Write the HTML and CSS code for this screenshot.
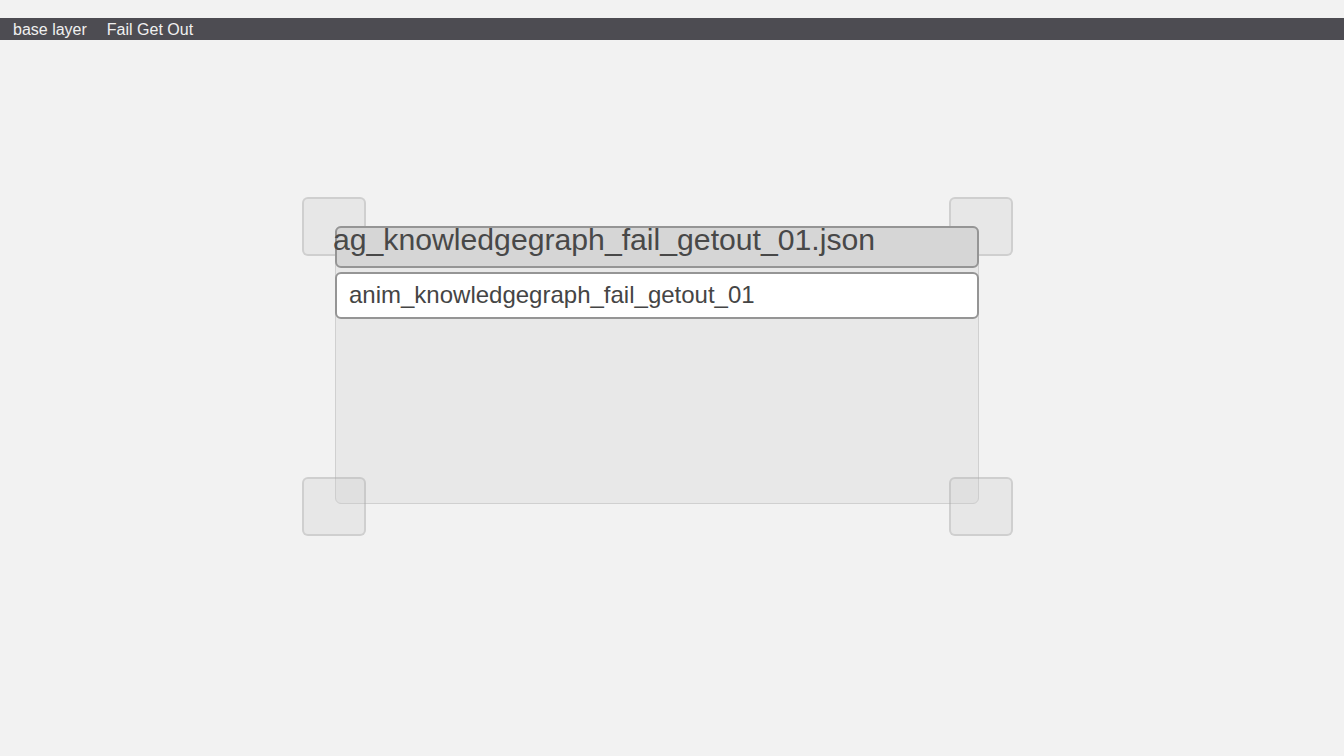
FILE: index.html
```html
<!DOCTYPE html>
<html>
<head>
<meta charset="utf-8">
<link rel="stylesheet" href="styles.css">
</head>
<body>
<div class="topbar">
  <span class="crumb">base layer</span>
  <span class="crumb">Fail Get Out</span>
</div>
<div class="stage">
  <div class="node">
    <div class="handle tl"></div>
    <div class="handle tr"></div>
    <div class="handle bl"></div>
    <div class="handle br"></div>
    <div class="title"><span class="title-text">ag_knowledgegraph_fail_getout_01.json</span></div>
    <div class="field">anim_knowledgegraph_fail_getout_01</div>
  </div>
</div>
</body>
</html>
```
FILE: styles.css
```css
html, body {
  margin: 0;
  padding: 0;
  background: #f2f2f2;
  font-family: "Liberation Sans", Arial, sans-serif;
  min-height: 756px;
}
.topbar {
  margin-top: 18px;
  height: 22px;
  background: #4d4c52;
  display: flex;
  align-items: center;
  gap: 20px;
  padding-left: 13px;
  padding-top: 1px;
  box-sizing: border-box;
  color: #f0f0f0;
  font-size: 16px;
}
.stage {
  padding-top: 186px;
  padding-left: 335px;
  padding-bottom: 200px;
}
.node {
  position: relative;
  width: 642px;
  height: 276px;
  background: #e8e8e8;
  border: 1px solid #d0d0d0;
  border-radius: 6px;
}
.handle {
  position: absolute;
  width: 60px;
  height: 55px;
  border: 2px solid rgba(160, 160, 160, 0.35);
  border-radius: 6px;
  background: rgba(200, 200, 200, 0.25);
  z-index: 1;
}
.handle.tl { left: -34px; top: -30px; }
.handle.tr { left: 613px; top: -30px; }
.handle.bl { left: -34px; top: 250px; }
.handle.br { left: 613px; top: 250px; }
.title {
  position: relative;
  z-index: 2;
  margin: -1px -1px 0 -1px;
  height: 38px;
  background: #d6d6d6;
  border: 2px solid #959595;
  border-radius: 6px;
}
.title-text {
  display: block;
  margin-left: -4px;
  margin-top: -6px;
  font-size: 30.2px;
  line-height: 36px;
  color: #484848;
  white-space: nowrap;
}
.field {
  position: relative;
  z-index: 2;
  margin: 4px -1px 0 -1px;
  height: 43px;
  background: #ffffff;
  border: 2px solid #959595;
  border-radius: 6px;
  padding-left: 12px;
  font-size: 24px;
  line-height: 42px;
  color: #454545;
  white-space: nowrap;
}
```
